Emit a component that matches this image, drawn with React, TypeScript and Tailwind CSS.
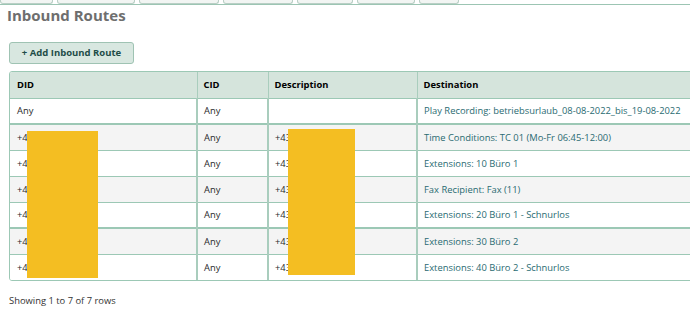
import React from "react";

const tabs = [53, 78, 80, 70, 56, 58, 40];

interface Route {
  did: string;
  cid: string;
  desc: string;
  dest: string;
}

const routes: Route[] = [
  { did: "Any", cid: "Any", desc: "", dest: "Play Recording: betriebsurlaub_08-08-2022_bis_19-08-2022" },
  { did: "+4", cid: "Any", desc: "+43", dest: "Time Conditions: TC 01 (Mo-Fr 06:45-12:00)" },
  { did: "+4", cid: "Any", desc: "+43", dest: "Extensions: 10 Büro 1" },
  { did: "+4", cid: "Any", desc: "+43", dest: "Fax Recipient: Fax (11)" },
  { did: "+4", cid: "Any", desc: "+43", dest: "Extensions: 20 Büro 1 - Schnurlos" },
  { did: "+4", cid: "Any", desc: "+43", dest: "Extensions: 30 Büro 2" },
  { did: "+4", cid: "Any", desc: "+43", dest: "Extensions: 40 Büro 2 - Schnurlos" },
];

export default function App() {
  return (
    <div className="w-[690px] h-[309px] overflow-hidden bg-white text-[#333] font-['Open_Sans',sans-serif]">
      <div className="flex gap-[4px] h-[4px] border-b border-[#9cc5b3] box-content">
        {tabs.map((w, i) => (
          <div
            key={i}
            style={{ width: w }}
            className="h-[4px] border-x border-b border-[#b9cfc5] rounded-b-[3px] bg-[#f2f5f3]"
          />
        ))}
      </div>

      <h2 className="ml-[7px] text-[15px] leading-[20px] font-bold text-[#6e6e6e]">Inbound Routes</h2>

      <button
        type="button"
        className="mt-[17px] ml-[9px] h-[22px] w-[125px] flex items-center justify-center rounded-[3px] border border-[#9fc3b3] bg-[#d8e7e0] text-[9.5px] font-bold text-[#1e4d48]"
      >
        + Add Inbound Route
      </button>

      <div className="relative mt-[7px] ml-[9px] w-[700px] border border-[#9cc8b5] rounded-[3px] overflow-hidden">
        <table className="w-full border-collapse text-[9.4px] leading-[13px] table-fixed whitespace-nowrap text-[#2b2b2b]">
          <colgroup>
            <col className="w-[187px]" />
            <col className="w-[71px]" />
            <col className="w-[149px]" />
            <col />
          </colgroup>
          <thead>
            <tr className="bg-[#d5e4dc] h-[26px]">
              <th className="text-left font-bold text-black pl-[7px] border-r border-[#a9cdbd]">DID</th>
              <th className="text-left font-bold text-black pl-[6px] border-r border-[#a9cdbd]">CID</th>
              <th className="text-left font-bold text-black pl-[6px] border-r border-[#a9cdbd]">Description</th>
              <th className="text-left font-bold text-black pl-[6px]">Destination</th>
            </tr>
          </thead>
          <tbody>
            {routes.map((r, i) => (
              <tr
                key={i}
                className={`h-[26px] border-t ${i === 1 || i === 5 ? "border-t-2" : ""} border-[#9cc8b5] ${
                  i % 2 === 1 ? "bg-[#f4f4f4]" : "bg-white"
                }`}
              >
                <td className="pl-[7px] border-r-2 border-[#a9cdbd]">{r.did}</td>
                <td className="pl-[6px] border-r-2 border-[#a9cdbd]">{r.cid}</td>
                <td className="pl-[6px] border-r-2 border-[#a9cdbd]">{r.desc}</td>
                <td className="pl-[6px] text-[#2a6b72]">{r.dest}</td>
              </tr>
            ))}
          </tbody>
        </table>
        <div className="absolute left-[17px] top-[59px] w-[71px] h-[147px] bg-[#f4be22]" />
        <div className="absolute left-[278px] top-[57px] w-[67px] h-[146px] bg-[#f4be22]" />
      </div>

      <div className="mt-[13px] ml-[9px] text-[9.4px] leading-[14px] text-[#333]">Showing 1 to 7 of 7 rows</div>
    </div>
  );
}
